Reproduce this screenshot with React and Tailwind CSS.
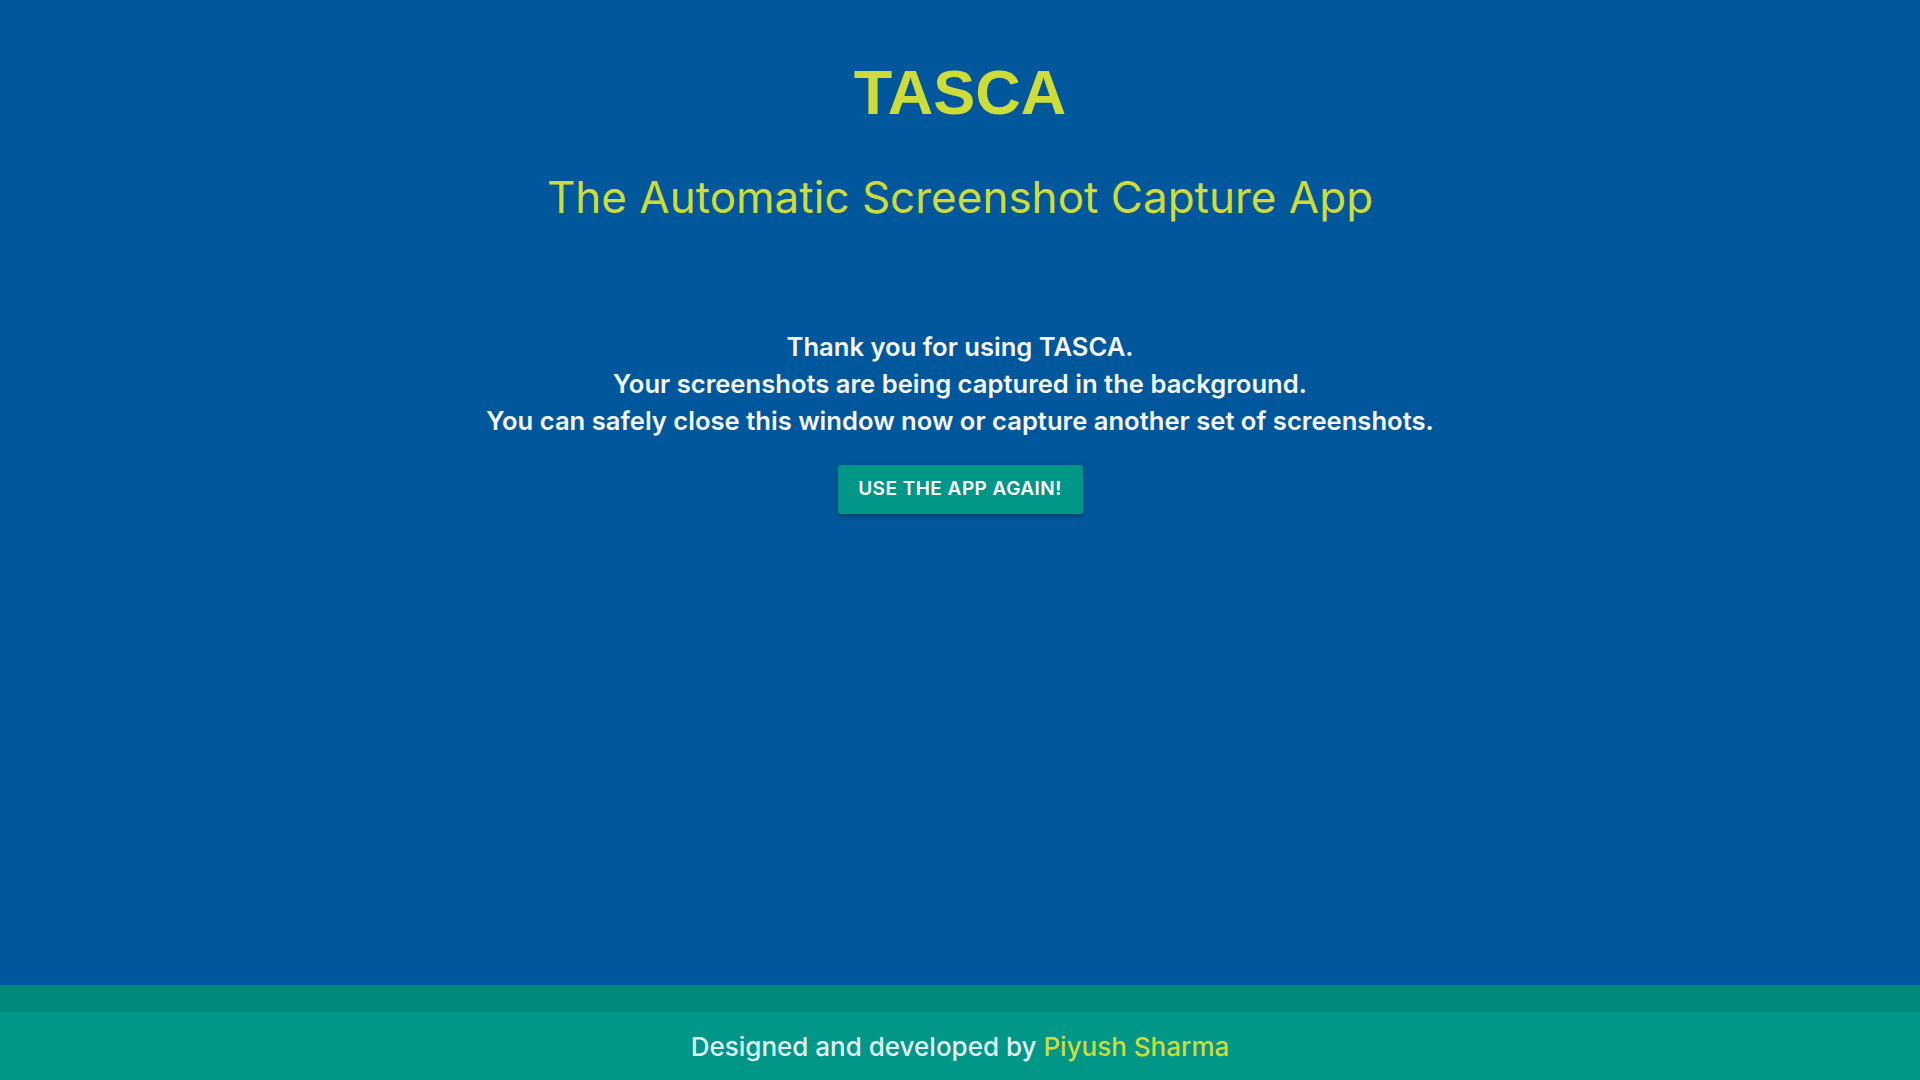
import React from 'react';

const App = () => {
  return (
    <div className="min-h-screen flex flex-col bg-[#01579b]" style={{ fontFamily: 'Inter, "DejaVu Sans", sans-serif' }}>
      <main className="flex-1 flex flex-col items-center text-center">
        <h1 className="mt-[61px] text-[63px] leading-[63px] font-bold text-[#cddc39] font-['Liberation_Sans',Arial,sans-serif]">
          TASCA
        </h1>
        <h2 className="mt-[47px] text-[44px] leading-[52px] font-normal text-[#cddc39]">
          The Automatic Screenshot Capture App
        </h2>

        <div className="mt-[105px] text-[25.6px] leading-[37px] font-semibold text-[#f5f5f5]">
          <p>Thank you for using TASCA.</p>
          <p>Your screenshots are being captured in the background.</p>
          <p>You can safely close this window now or capture another set of screenshots.</p>
        </div>

        <button className="mt-[26px] w-[245px] h-[49px] rounded-[3px] bg-[#009688] text-white text-[19px] font-semibold tracking-wide uppercase shadow-[0_2px_5px_rgba(0,0,0,0.3)]">
          Use the app again!
        </button>
      </main>

      {/* Footer */}
      <footer>
        <div className="h-[27px] bg-[#00897b]" />
        <div className="h-[68px] flex items-center justify-center bg-[#009688] text-[26px] font-medium text-[#e0f2f1]">
          Designed and developed by&nbsp;<span className="text-[#cddc39]">Piyush Sharma</span>
        </div>
      </footer>
    </div>
  );
};

export default App;
